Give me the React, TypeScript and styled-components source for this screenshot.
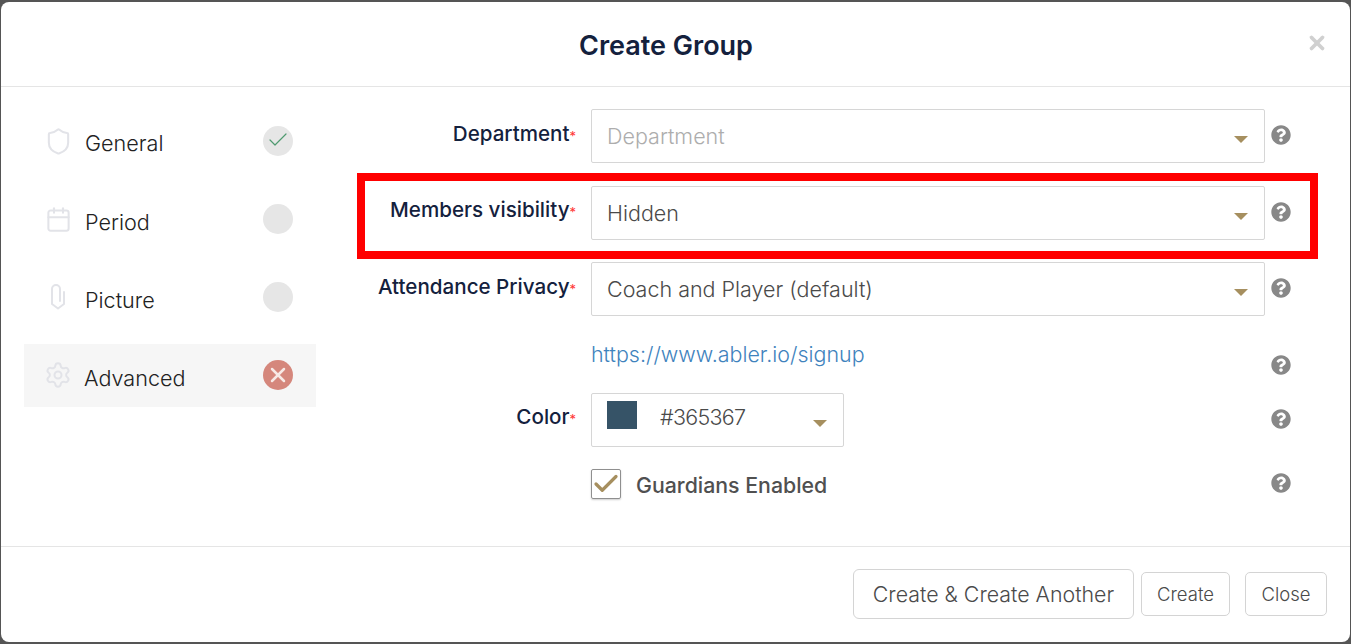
import React from "react";
import styled, { createGlobalStyle } from "styled-components";
import { Shield, Calendar, Settings, Check, X } from "lucide-react";
import { FaQuestionCircle } from "react-icons/fa";

const Global = createGlobalStyle`
  html, body { margin: 0; padding: 0; width: 1351px; height: 644px; overflow: hidden; background: #555; }
  * { box-sizing: border-box; }
  body { font-family: Inter, "Liberation Sans", sans-serif; }
`;

const Backdrop = styled.div`
  width: 1351px;
  height: 644px;
  padding: 2px 1px 2px 1px;
  background: #555;
`;

const Modal = styled.div`
  position: relative;
  width: 1349px;
  height: 640px;
  background: #fff;
  border-radius: 8px;
  display: flex;
  flex-direction: column;
`;

const Header = styled.header`
  position: relative;
  height: 85px;
  flex: none;
  padding: 3px 19px 0 0;
  border-bottom: 1px solid #e5e5e5;
  display: flex;
  align-items: center;
  justify-content: center;
`;

const Title = styled.h1`
  margin: 0;
  font-size: 27px;
  font-weight: 600;
  color: #14213d;
`;

const CloseMark = styled.span`
  position: absolute;
  right: 22px;
  top: 30px;
  color: #d0d0d0;
  display: flex;
`;

const Body = styled.div`
  flex: 1;
  display: flex;
`;

const Sidebar = styled.nav`
  width: 339px;
  flex: none;
  padding: 23px 23px 0;
  display: flex;
  flex-direction: column;
  gap: 15px;
`;

const Step = styled.div<{ $active?: boolean }>`
  height: 63px;
  width: 292px;
  padding: 0 23px 0 22px;
  display: flex;
  align-items: flex-start;
  background: ${(p) => (p.$active ? "#f6f6f6" : "transparent")};
`;

const StepIcon = styled.span`
  width: 24px;
  height: 26px;
  margin-top: 18px;
  flex: none;
  display: flex;
  justify-content: center;
  align-items: center;
  color: #e2e3e8;
  svg { flex: none; }
`;

const StepLabel = styled.span<{ $top: number; $left: number }>`
  margin: ${(p) => p.$top}px 0 0 ${(p) => p.$left}px;
  flex: 1;
  font-size: 21.6px;
  line-height: 26px;
  font-weight: 300;
  color: #222;
`;

const StepState = styled.span<{ $tone: "done" | "empty" | "error" }>`
  width: 30px;
  height: 30px;
  margin-top: 16px;
  padding-bottom: ${(p) => (p.$tone === "done" ? 3 : 0)}px;
  flex: none;
  border-radius: 50%;
  display: flex;
  align-items: center;
  justify-content: center;
  background: ${(p) => (p.$tone === "error" ? "#d5877c" : "#e6e6e6")};
  color: ${(p) => (p.$tone === "error" ? "#f7e9e6" : "#4f9a70")};
  svg { flex: none; }
`;

const Form = styled.div`
  flex: 1;
  padding-top: 22px;
  display: flex;
  flex-direction: column;
`;

const Row = styled.div<{ $after?: number }>`
  display: flex;
  align-items: flex-start;
  margin-bottom: ${(p) => p.$after ?? 22}px;
`;

const Label = styled.label<{ $top?: number }>`
  width: 236px;
  flex: none;
  margin-right: 15px;
  padding-top: ${(p) => p.$top ?? 11}px;
  text-align: right;
  font-size: 20.6px;
  line-height: 28px;
  font-weight: 500;
  color: #14213d;
  white-space: nowrap;
`;

const Star = styled.span`
  font-size: 13px;
  font-weight: 400;
  color: #f33;
`;

const Select = styled.div<{ $narrow?: boolean }>`
  width: ${(p) => (p.$narrow ? "253px" : "674px")};
  height: 54px;
  flex: none;
  position: relative;
  display: flex;
  align-items: center;
  padding: 0 15px;
  border: 1px solid #d6d6d6;
  border-radius: 2px;
  background: #fff;
`;

const SelectText = styled.span<{ $placeholder?: boolean }>`
  font-size: 21.5px;
  font-weight: 300;
  color: ${(p) => (p.$placeholder ? "#adadad" : "#4a4a4a")};
`;

const ColorCode = styled.span`
  margin-top: -6px;
  font-size: 21.5px;
  font-weight: 300;
  letter-spacing: -0.7px;
  color: #4a4a4a;
`;

const Caret = styled.span`
  position: absolute;
  right: 16px;
  top: 26px;
  width: 0;
  height: 0;
  border-left: 7px solid transparent;
  border-right: 7px solid transparent;
  border-top: 7px solid #a68f5f;
`;

const Swatch = styled.span`
  width: 30px;
  height: 28px;
  flex: none;
  margin: -11px 23px 0 0;
  background: #365367;
`;

const Help = styled.span<{ $left?: number; $top?: number }>`
  margin-left: ${(p) => p.$left ?? 6}px;
  margin-top: ${(p) => p.$top ?? 16}px;
  width: 20px;
  height: 20px;
  flex: none;
  display: flex;
  color: #888;
`;

const Indent = styled.div`
  width: 251px;
  flex: none;
`;

const LinkCell = styled.a`
  width: 674px;
  flex: none;
  height: 32px;
  line-height: 30px;
  font-size: 21.45px;
  font-weight: 300;
  color: #3f83bd;
  text-decoration: none;
`;

const CheckBox = styled.span`
  width: 30px;
  height: 30px;
  flex: none;
  display: flex;
  align-items: center;
  justify-content: center;
  border: 1px solid #8f8f8f;
  border-radius: 2px;
  box-shadow: 0 1px 2px rgba(0, 0, 0, 0.2);
  color: #a68f5f;
  svg { flex: none; }
`;

const CheckLabel = styled.span`
  width: 644px;
  flex: none;
  padding-left: 15px;
  line-height: 33px;
  font-size: 21.3px;
  font-weight: 500;
  color: #505050;
`;

const Footer = styled.footer`
  height: 96px;
  flex: none;
  border-top: 1px solid #e5e5e5;
  padding: 0 23px 1px 0;
  display: flex;
  justify-content: flex-end;
  align-items: center;
`;

const Button = styled.button<{ $width: number; $big?: boolean; $gap?: number }>`
  width: ${(p) => p.$width}px;
  height: ${(p) => (p.$big ? 50 : 44)}px;
  padding: 0;
  margin-left: ${(p) => p.$gap ?? 0}px;
  border: 1px solid #d4d4d4;
  border-radius: ${(p) => (p.$big ? 6 : 5)}px;
  background: #fff;
  font-family: inherit;
  font-size: ${(p) => (p.$big ? 21.35 : 18.5)}px;
  font-weight: 300;
  color: #4a4a4a;
`;

const Annotation = styled.div`
  position: absolute;
  left: 356px;
  top: 171px;
  width: 961px;
  height: 86px;
  border: 8px solid #f00;
  pointer-events: none;
`;

const ClipIcon = () => (
  <svg width="16" height="26" viewBox="0 0 16 26" fill="none" stroke="currentColor" strokeWidth="2" strokeLinejoin="round" strokeLinecap="round">
    <path d="M14 8V20L8 24.5L2 20V5a4 4 0 0 1 8 0V17" />
  </svg>
);

const steps = [
  { label: "General", icon: <Shield size={29} strokeWidth={1.7} />, tone: "done" as const, top: 20, left: 15 },
  { label: "Period", icon: <Calendar size={27} strokeWidth={1.8} />, tone: "empty" as const, top: 21, left: 15 },
  { label: "Picture", icon: <ClipIcon />, tone: "empty" as const, top: 21, left: 15 },
  { label: "Advanced", icon: <Settings size={28} strokeWidth={1.7} />, tone: "error" as const, active: true, top: 21, left: 14 },
];

const HelpIcon = (p: { left?: number; top?: number }) => (
  <Help $left={p.left} $top={p.top}>
    <FaQuestionCircle size={20} />
  </Help>
);

export default function App() {
  return (
    <>
      <Global />
      <Backdrop>
        <Modal>
          <Header>
            <Title>Create Group</Title>
            <CloseMark>
              <X size={22} strokeWidth={4} />
            </CloseMark>
          </Header>
          <Body>
            <Sidebar>
              {steps.map((s) => (
                <Step key={s.label} $active={s.active}>
                  <StepIcon>{s.icon}</StepIcon>
                  <StepLabel $top={s.top} $left={s.left}>{s.label}</StepLabel>
                  <StepState $tone={s.tone}>
                    {s.tone === "done" && <Check size={24} strokeWidth={1.2} />}
                    {s.tone === "error" && <X size={24} strokeWidth={2.5} />}
                  </StepState>
                </Step>
              ))}
            </Sidebar>
            <Form>
              <Row $after={23}>
                <Label>Department<Star>*</Star></Label>
                <Select>
                  <SelectText $placeholder>Department</SelectText>
                  <Caret />
                </Select>
                <HelpIcon />
              </Row>
              <Row>
                <Label $top={10}>Members visibility<Star>*</Star></Label>
                <Select>
                  <SelectText>Hidden</SelectText>
                  <Caret />
                </Select>
                <HelpIcon />
              </Row>
              <Row $after={23}>
                <Label>Attendance Privacy<Star>*</Star></Label>
                <Select>
                  <SelectText>Coach and Player (default)</SelectText>
                  <Caret />
                </Select>
                <HelpIcon />
              </Row>
              <Row $after={18}>
                <Indent />
                <LinkCell href="#">https://www.abler.io/signup</LinkCell>
                <HelpIcon top={16} />
              </Row>
              <Row>
                <Label $top={10}>Color<Star>*</Star></Label>
                <Select $narrow>
                  <Swatch />
                  <ColorCode>#365367</ColorCode>
                  <Caret />
                </Select>
                <HelpIcon left={427} top={16} />
              </Row>
              <Row>
                <Indent />
                <CheckBox>
                  <Check size={30} strokeWidth={2.6} />
                </CheckBox>
                <CheckLabel>Guardians Enabled</CheckLabel>
                <HelpIcon top={4} />
              </Row>
            </Form>
          </Body>
          <Footer>
            <Button $big $width={281}>Create &amp; Create Another</Button>
            <Button $gap={7} $width={89}>Create</Button>
            <Button $gap={15} $width={82}>Close</Button>
          </Footer>
          <Annotation />
        </Modal>
      </Backdrop>
    </>
  );
}
